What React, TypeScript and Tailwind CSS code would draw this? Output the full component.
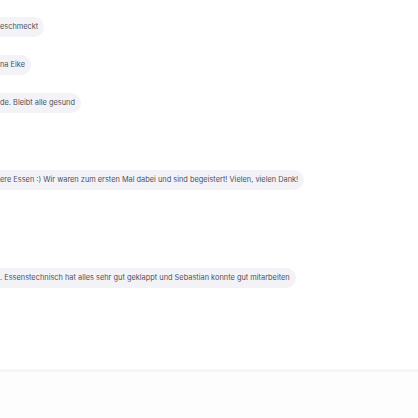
import React from "react";

const Bubble = ({ text, className = "" }: { text: string; className?: string }) => (
  <div className={`flex justify-start ${className}`}>
    <div className="h-[20px] flex items-center bg-[#f3f3f7] rounded-r-[10px] pl-0 pr-[6px] text-[7.4px] text-[#50505a] whitespace-nowrap" style={{ fontFamily: "Inter, 'Noto Sans', sans-serif" }}>
      {text}
    </div>
  </div>
);

export default function App() {
  return (
    <div className="w-[418px] h-[418px] bg-white overflow-hidden flex flex-col">
      <div className="flex flex-col pt-[17px]">
        <Bubble text="eschmeckt" />
        <Bubble text="na Eike" className="mt-[18px]" />
        <Bubble text="de. Bleibt alle gesund" className="mt-[18px]" />
        <Bubble text="ere Essen :) Wir waren zum ersten Mal dabei und sind begeistert! Vielen, vielen Dank!" className="mt-[57px]" />
        <Bubble text=". Essenstechnisch hat alles sehr gut geklappt und Sebastian konnte gut mitarbeiten" className="mt-[78px]" />
      </div>
      <div className="mt-[81px] h-[3px] bg-[#f6f6f6]" />
      <div className="flex-1 bg-[#fdfdfd]" />
    </div>
  );
}
